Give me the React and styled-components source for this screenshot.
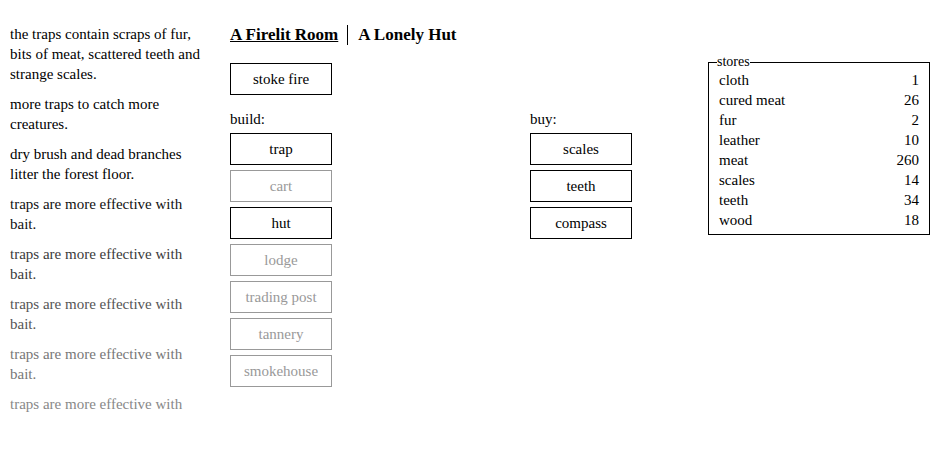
import React from "react";
import styled, { createGlobalStyle } from "styled-components";

const GlobalStyle = createGlobalStyle`
  html, body {
    margin: 0;
    padding: 0;
    background: #fff;
  }
  body {
    font-family: "Liberation Serif", "Times New Roman", Times, serif;
    font-size: 15px;
    color: #000;
  }
`;

const Page = styled.div`
  display: flex;
  align-items: flex-start;
  padding: 24px 0 0 10px;
  width: 946px;
  height: 450px;
  box-sizing: border-box;
  overflow: hidden;
`;

// the log is cut off at the bottom, older entries fade out
const Notifications = styled.div`
  width: 200px;
  height: 390px;
  overflow: hidden;
  margin-right: 20px;
  display: flex;
  flex-direction: column;
  gap: 10px;
`;

const Notification = styled.div`
  line-height: 20px;
  flex-shrink: 0;
  color: ${(p) => p.$color};
`;

const Main = styled.div`
  display: flex;
  flex-direction: column;
`;

const Header = styled.div`
  display: flex;
  align-items: center;
  font-size: 17px;
  font-weight: bold;
  line-height: 20px;
  margin-top: 1px;
  margin-bottom: 18px;
`;

const HeaderTab = styled.span`
  text-decoration: ${(p) => (p.$selected ? "underline" : "none")};
  cursor: pointer;
  ${(p) =>
    p.$divided &&
    `
    border-left: 1px solid #000;
    margin-left: 9px;
    padding-left: 10px;
  `}
`;

const Body = styled.div`
  display: flex;
  align-items: flex-start;
`;

const Column = styled.div`
  width: ${(p) => p.$width}px;
  display: flex;
  flex-direction: column;
  align-items: flex-start;
`;

const Label = styled.div`
  line-height: 20px;
  margin-top: ${(p) => p.$offset || 0}px;
  margin-bottom: 4px;
`;

const Button = styled.div`
  width: 100px;
  padding: 5px 0;
  line-height: 20px;
  text-align: center;
  border: 1px solid ${(p) => (p.$disabled ? "#999" : "#000")};
  color: ${(p) => (p.$disabled ? "#999" : "#000")};
  margin-bottom: 5px;
  cursor: ${(p) => (p.$disabled ? "default" : "pointer")};
`;

const Stoke = styled(Button)`
  margin-bottom: 14px;
`;

const Stores = styled.div`
  position: relative;
  width: 200px;
  margin-top: -1px;
  padding: 7px 10px 4px;
  border: 1px solid #000;
`;

const StoresTitle = styled.span`
  position: absolute;
  top: -9px;
  left: 8px;
  background: #fff;
  font-size: 14px;
  line-height: 16px;
`;

const StoreRow = styled.div`
  display: flex;
  justify-content: space-between;
  line-height: 20px;
`;

const notes = [
  { text: "the traps contain scraps of fur, bits of meat, scattered teeth and strange scales.", color: "#000" },
  { text: "more traps to catch more creatures.", color: "#000" },
  { text: "dry brush and dead branches litter the forest floor.", color: "#000" },
  { text: "traps are more effective with bait.", color: "#111" },
  { text: "traps are more effective with bait.", color: "#3a3a3a" },
  { text: "traps are more effective with bait.", color: "#555" },
  { text: "traps are more effective with bait.", color: "#777" },
  { text: "traps are more effective with bait.", color: "#888" },
];

const builds = [
  { name: "trap" },
  { name: "cart", disabled: true },
  { name: "hut" },
  { name: "lodge", disabled: true },
  { name: "trading post", disabled: true },
  { name: "tannery", disabled: true },
  { name: "smokehouse", disabled: true },
];

const buys = ["scales", "teeth", "compass"];

const stores = [
  ["cloth", 1],
  ["cured meat", 26],
  ["fur", 2],
  ["leather", 10],
  ["meat", 260],
  ["scales", 14],
  ["teeth", 34],
  ["wood", 18],
];

export default function App() {
  return (
    <>
      <GlobalStyle />
      <Page>
        <Notifications>
          {notes.map((n, i) => (
            <Notification key={i} $color={n.color}>
              {n.text}
            </Notification>
          ))}
        </Notifications>
        <Main>
          <Header>
            <HeaderTab $selected>A Firelit Room</HeaderTab>
            <HeaderTab $divided>A Lonely Hut</HeaderTab>
          </Header>
          <Body>
            <Column $width={300}>
              <Stoke>stoke fire</Stoke>
              <Label>build:</Label>
              {builds.map((b) => (
                <Button key={b.name} $disabled={b.disabled}>
                  {b.name}
                </Button>
              ))}
            </Column>
            <Column $width={178}>
              <Label $offset={46}>buy:</Label>
              {buys.map((b) => (
                <Button key={b}>{b}</Button>
              ))}
            </Column>
            <Stores>
              <StoresTitle>stores</StoresTitle>
              {stores.map(([k, v]) => (
                <StoreRow key={k}>
                  <span>{k}</span>
                  <span>{v}</span>
                </StoreRow>
              ))}
            </Stores>
          </Body>
        </Main>
      </Page>
    </>
  );
}
